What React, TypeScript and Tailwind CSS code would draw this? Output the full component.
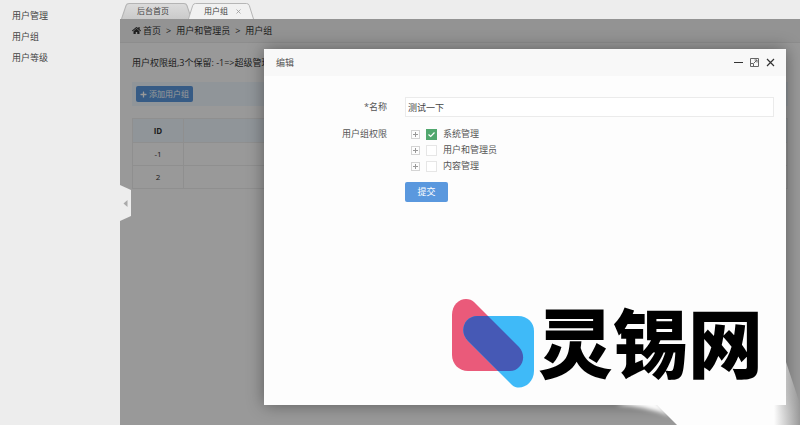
import React, {useState} from "react";
import {FaHome, FaPlus} from "react-icons/fa";

const menuItems = ["用户管理", "用户组", "用户等级"];

const rows = [{id: "-1"}, {id: "2"}];

const permissions = [
    {key: "system", label: "系统管理", checked: true},
    {key: "users", label: "用户和管理员", checked: false},
    {key: "content", label: "内容管理", checked: false},
];

const Sidebar = () => (
    <nav className="w-[120px] shrink-0 bg-[#ededed] pt-[5px]">
        {menuItems.map((item) => (
            <a key={item} href="#" className="block pl-3 text-[9px] leading-[21px] text-[#444]">{item}</a>
        ))}
    </nav>
);

const Tab = ({label, active}: { label: string, active?: boolean }) => (
    <div className={`relative h-4 ${active ? "-ml-1 w-[66px]" : "w-[71px]"}`}>
        <svg className="absolute inset-0 h-full w-full" viewBox="0 0 70 16" preserveAspectRatio="none">
            <defs>
                <linearGradient id="tabGrey" x1="0" y1="0" x2="0" y2="1">
                    <stop offset="0" stopColor="#dcdcdc"/>
                    <stop offset="1" stopColor="#cacaca"/>
                </linearGradient>
            </defs>
            <path
                d="M0.5 16 L5 2.5 Q5.700 0.500 8 0.500 H62 Q64.300 0.500 65 2.500 L69.500 16"
                fill={active ? "#f1f1f1" : "url(#tabGrey)"}
                stroke="#b4b4b4"
            />
        </svg>
        <div className="relative flex h-full items-center pl-4 text-[8px] text-[#444]">
            <button type="button" className="whitespace-nowrap">{label}</button>
            {active && (
                <button type="button" aria-label="关闭标签" className="ml-2">
                    <svg className="h-[5px] w-[5px]" viewBox="0 0 5 5" stroke="#999" strokeWidth="0.8">
                        <path d="M0.5 0.5 L4.5 4.5 M4.5 0.5 L0.5 4.5"/>
                    </svg>
                </button>
            )}
        </div>
    </div>
);

const GroupList = () => (
    <div className="h-full bg-white text-[9px] text-[#333]">
        <div className="flex h-6 items-center gap-[5px] border-b border-[#ececec] bg-[#f5f5f5] pl-3">
            <a href="#" className="flex items-center gap-[2px]"><FaHome className="h-[9px] w-[9px]"/>首页</a>
            <span>&gt;</span>
            <a href="#">用户和管理员</a>
            <span>&gt;</span>
            <span>用户组</span>
        </div>
        <div className="px-3">
            <p className="mt-3 leading-4">用户权限组,3个保留: -1=&gt;超级管理</p>
            <div className="mt-[11px] flex h-6 items-center bg-[#f0f8ff] px-1">
                <button
                    type="button"
                    className="flex h-4 items-center gap-[2px] rounded-xs bg-[#5a98de] px-1 text-[8px] whitespace-nowrap text-white"
                >
                    <FaPlus className="h-[7px] w-[7px]"/>添加用户组
                </button>
            </div>
            <table className="mt-3 w-full border-collapse text-center text-[8px]">
                <thead>
                    <tr className="h-6 bg-[#f0f8ff]">
                        <th className="w-[51px] border border-[#efefef] font-bold">ID</th>
                        <th className="border border-[#efefef]"></th>
                    </tr>
                </thead>
                <tbody>
                    {rows.map((row) => (
                        <tr key={row.id} className="h-[23px]">
                            <td className="border border-[#efefef]">{row.id}</td>
                            <td className="border border-[#efefef]"></td>
                        </tr>
                    ))}
                </tbody>
            </table>
        </div>
    </div>
);

const PermissionTree = () => {
    const [items, setItems] = useState(permissions);

    const toggle = (key: string) => {
        setItems(items.map((item) => item.key === key ? {...item, checked: !item.checked} : item))
    }

    return (
        <ul className="pl-1.5">
            {items.map((item) => (
                <li key={item.key} className="flex h-4 items-center">
                    <button type="button" aria-label={`展开${item.label}`} className="h-[9px] w-[9px] border border-[#d4d4d4]">
                        <svg viewBox="0 0 7 7" stroke="#999">
                            <path d="M1 3.5 H6 M3.5 1 V6"/>
                        </svg>
                    </button>
                    <label className="flex items-center gap-1.5 pl-1.5">
                        <span className="relative flex h-[11px] w-[11px]">
                            <input
                                type="checkbox"
                                checked={item.checked}
                                onChange={() => toggle(item.key)}
                                className="h-full w-full appearance-none border border-[#e6e6e6] bg-white checked:border-[#51a76e] checked:bg-[#51a76e]"
                            />
                            {item.checked && (
                                <svg className="pointer-events-none absolute inset-0" viewBox="0 0 11 11" fill="none" stroke="#fff" strokeWidth="1.2">
                                    <path d="M2.5 5.5 L4.700 7.500 L8.500 3.500"/>
                                </svg>
                            )}
                        </span>
                        {item.label}
                    </label>
                </li>
            ))}
        </ul>
    );
};

const EditDialog = () => (
    <div role="dialog" aria-label="编辑" className="absolute top-[30px] right-3.5 bottom-5 left-36 bg-[#fdfdfd] text-[9px] text-[#555] shadow-[0_0_16px_rgba(0,0,0,0.4)]">
        <div className="flex h-[27px] items-center justify-between bg-[#f8f8f8] pr-[11px] pl-3">
            <h2>编辑</h2>
            <div className="flex gap-[7px] text-[#333]">
                <button type="button" aria-label="最小化">
                    <svg className="h-[9px] w-[9px]" viewBox="0 0 9 9" stroke="currentColor"><path d="M0 4.500 H9"/></svg>
                </button>
                <button type="button" aria-label="最大化">
                    <svg className="h-[9px] w-[9px]" viewBox="0 0 9 9" fill="none" stroke="#666">
                        <path d="M0.5 0.500 H8.500 V8.500 H0.500 Z M4 5 L7 2 M4.500 2 H7 V4.500 M0.500 5.500 H3.500 V8.500"/>
                    </svg>
                </button>
                <button type="button" aria-label="关闭">
                    <svg className="h-[9px] w-[9px]" viewBox="0 0 9 9" stroke="currentColor" strokeWidth="1.2">
                        <path d="M1 1 L8 8 M8 1 L1 8"/>
                    </svg>
                </button>
            </div>
        </div>
        <form className="grid grid-cols-[123px_1fr] gap-x-[18px] pt-[21px] pr-3" onSubmit={(e) => e.preventDefault()}>
            <label htmlFor="name" className="text-right leading-[19px]">*名称</label>
            <input
                id="name"
                type="text"
                defaultValue="测试一下"
                className="h-5 w-full border border-[#ebebeb] bg-white px-0.5 text-[#444]"
            />
            <span className="pt-[9px] text-right leading-4">用户组权限</span>
            <div className="pt-[9px]">
                <PermissionTree/>
                <button type="submit" className="mt-2 h-5 w-[43px] rounded-xs bg-[#5a98de] text-white">提交</button>
            </div>
        </form>
    </div>
);

// soft white patch behind the brand mark in the lower right corner
const CornerGlow = () => (
    <svg className="pointer-events-none absolute right-0 bottom-0 h-[65px] w-[190px]" viewBox="0 0 190 65">
        <defs>
            <filter id="soft" x="-20%" y="-50%" width="140%" height="200%">
                <feGaussianBlur stdDeviation="2"/>
            </filter>
            <linearGradient id="fade" gradientUnits="userSpaceOnUse" x1="164" y1="0" x2="190" y2="0">
                <stop offset="0" stopColor="#fdfdfd"/>
                <stop offset="1" stopColor="#fdfdfd" stopOpacity="0"/>
            </linearGradient>
        </defs>
        <path d="M6 45 L42 36 L60 56 Q36 46 6 45 Z" fill="#fdfdfd" filter="url(#soft)"/>
        <path d="M40 38 L67 65 H164 V38 Z" fill="#fdfdfd"/>
        <path d="M176 2 L190 44 V65 H164 V45 H176 Z" fill="url(#fade)"/>
    </svg>
);

const Brand = () => (
    <div className="pointer-events-none absolute right-[37px] bottom-9 flex items-center gap-[3px]">
        <svg className="h-[91px] w-[84px]" viewBox="0 0 84 91">
            <path
                d="M1 17 C1 7 8 1 15 1 Q20 1 23 4 L68 49 C77 59 70 73 59 73 H17 C8 73 1 66 1 57 Z"
                fill="#ea5a7a"
            />
            <path
                d="M26 18 H67 C77 18 83 25 83 33 V73 C83 86 69 94 61 87 L17 43 C7 33 14 18 26 18 Z"
                fill="#3fbaf8"
            />
            <path
                d="M26 18 H37 L68 49 C77 59 70 73 59 73 H47 L17 43 C7 33 14 18 26 18 Z"
                fill="#4659b5"
            />
        </svg>
        <span className="text-[75px] leading-[91px] font-black whitespace-nowrap text-black">灵锡网</span>
    </div>
);

export default function App() {
    return (
        <div className="relative flex h-screen overflow-hidden font-['Open_Sans','Noto_Sans_CJK_SC',sans-serif]">
            <Sidebar/>
            <main className="flex min-w-0 flex-1 flex-col">
                <div className="flex h-[19px] items-end bg-[#ededed] pl-px">
                    <Tab label="后台首页"/>
                    <Tab label="用户组" active/>
                </div>
                <div className="relative flex-1">
                    <GroupList/>
                    <div className="absolute inset-0 bg-black/40"/>
                    <button type="button" aria-label="收起菜单" className="absolute top-[166px] left-0 h-9 w-[11px]">
                        <svg viewBox="0 0 11 36">
                            <path d="M0 0 L11 5 V31 L0 36 Z" fill="#ededed"/>
                            <path d="M7.500 15 V22 L3.500 18.500 Z" fill="#aaa"/>
                        </svg>
                    </button>
                    <EditDialog/>
                </div>
            </main>
            <CornerGlow/>
            <Brand/>
        </div>
    );
}
